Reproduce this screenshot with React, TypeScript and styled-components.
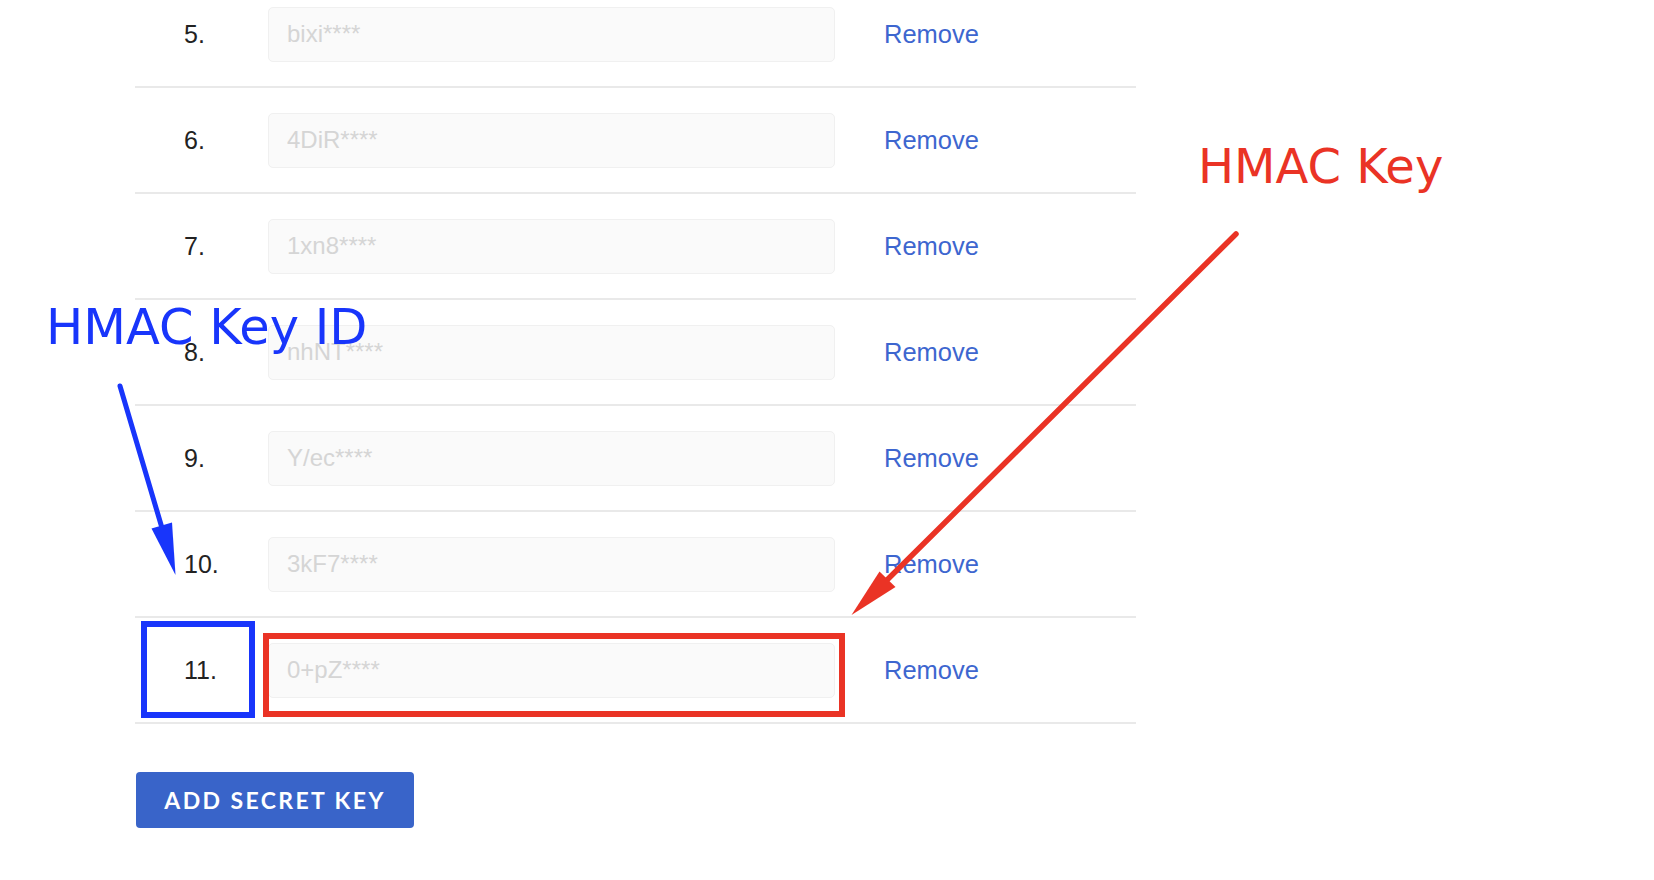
import styled, { createGlobalStyle } from 'styled-components';

const GlobalStyle = createGlobalStyle`
    html, body {
        margin: 0;
        padding: 0;
        background: #ffffff;
    }
    body {
        font-family: "Liberation Sans", Arial, Helvetica, sans-serif;
    }
`;

const Page = styled.div`
    position: relative;
    width: 1654px;
    height: 880px;
    overflow: hidden;
    background: #ffffff;
`;

const KeyList = styled.ul`
    list-style: none;
    margin: -18px 0 0 135px;
    padding: 0;
    width: 1001px;
`;

const KeyRow = styled.li`
    display: grid;
    grid-template-columns: 133px 567px auto;
    align-items: center;
    height: 104px;
    border-bottom: 2px solid #e9e9e9;
`;

const Index = styled.span`
    padding-left: 49px;
    font-size: 25px;
    color: #222222;
`;

const KeyInput = styled.input`
    box-sizing: border-box;
    width: 100%;
    height: 55px;
    padding: 0 18px;
    border: 1px solid #f0f0f0;
    border-radius: 5px;
    background: #fafafa;
    font-family: inherit;
    font-size: 24px;
    color: #333333;
    outline: none;

    &::placeholder {
        color: #d5d5d5;
    }
`;

const RemoveLink = styled.a`
    margin-left: 49px;
    font-size: 25.5px;
    color: #3d66cf;
    cursor: pointer;
`;

const Footer = styled.div`
    padding: 48px 0 0 136px;
`;

const AddButton = styled.button`
    width: 278px;
    height: 56px;
    border: none;
    border-radius: 4px;
    background: #3964c9;
    color: #ffffff;
    font-family: Lato, "Open Sans", sans-serif;
    font-weight: 700;
    font-size: 23px;
    letter-spacing: 2.4px;
    cursor: pointer;
`;

const Overlay = styled.div`
    position: absolute;
    inset: 0;
    pointer-events: none;
`;

const ArrowCanvas = styled.svg`
    position: absolute;
    left: 0;
    top: 0;
`;

const Callout = styled.div<{ $color: string; $x: number; $y: number; $size: number }>`
    position: absolute;
    left: ${(p) => p.$x}px;
    top: ${(p) => p.$y}px;
    font-family: "DejaVu Sans", Verdana, sans-serif;
    font-size: ${(p) => p.$size}px;
    line-height: 1;
    white-space: nowrap;
    color: ${(p) => p.$color};
`;

const Highlight = styled.div<{ $color: string; $x: number; $y: number; $w: number; $h: number }>`
    position: absolute;
    box-sizing: border-box;
    left: ${(p) => p.$x}px;
    top: ${(p) => p.$y}px;
    width: ${(p) => p.$w}px;
    height: ${(p) => p.$h}px;
    border: 6px solid ${(p) => p.$color};
`;

const BLUE = '#1835fb';
const RED = '#ea3325';

const keys = [
    { n: 5, key: 'bixi****' },
    { n: 6, key: '4DiR****' },
    { n: 7, key: '1xn8****' },
    { n: 8, key: 'nhNT****' },
    { n: 9, key: 'Y/ec****' },
    { n: 10, key: '3kF7****' },
    { n: 11, key: '0+pZ****' },
];

export default function App() {
    return (
        <>
            <GlobalStyle />
            <Page>
                <KeyList>
                    {keys.map((k) => (
                        <KeyRow key={k.n}>
                            <Index>{k.n}.</Index>
                            <KeyInput type="text" placeholder={k.key} readOnly />
                            <RemoveLink>Remove</RemoveLink>
                        </KeyRow>
                    ))}
                </KeyList>
                <Footer>
                    <AddButton>ADD SECRET KEY</AddButton>
                </Footer>

                {/* annotations drawn over the screenshot */}
                <Overlay>
                    <Highlight $color={BLUE} $x={141} $y={621} $w={114} $h={97} />
                    <Highlight $color={RED} $x={263} $y={633} $w={582} $h={84} />
                    <ArrowCanvas width="1654" height="880" viewBox="0 0 1654 880">
                        <line x1="120" y1="386" x2="162" y2="528" stroke={BLUE} strokeWidth="5" strokeLinecap="round" />
                        <polygon points="151.5,528.5 172,522.5 175.5,575" fill={BLUE} />
                        <line x1="1236" y1="234" x2="886" y2="581" stroke={RED} strokeWidth="5.5" strokeLinecap="round" />
                        <polygon points="879.5,571.5 895.5,587 851.5,615" fill={RED} />
                    </ArrowCanvas>
                    <Callout $color={BLUE} $x={46} $y={303} $size={49.5}>HMAC Key ID</Callout>
                    <Callout $color={RED} $x={1198} $y={142} $size={48}>HMAC Key</Callout>
                </Overlay>
            </Page>
        </>
    );
}
